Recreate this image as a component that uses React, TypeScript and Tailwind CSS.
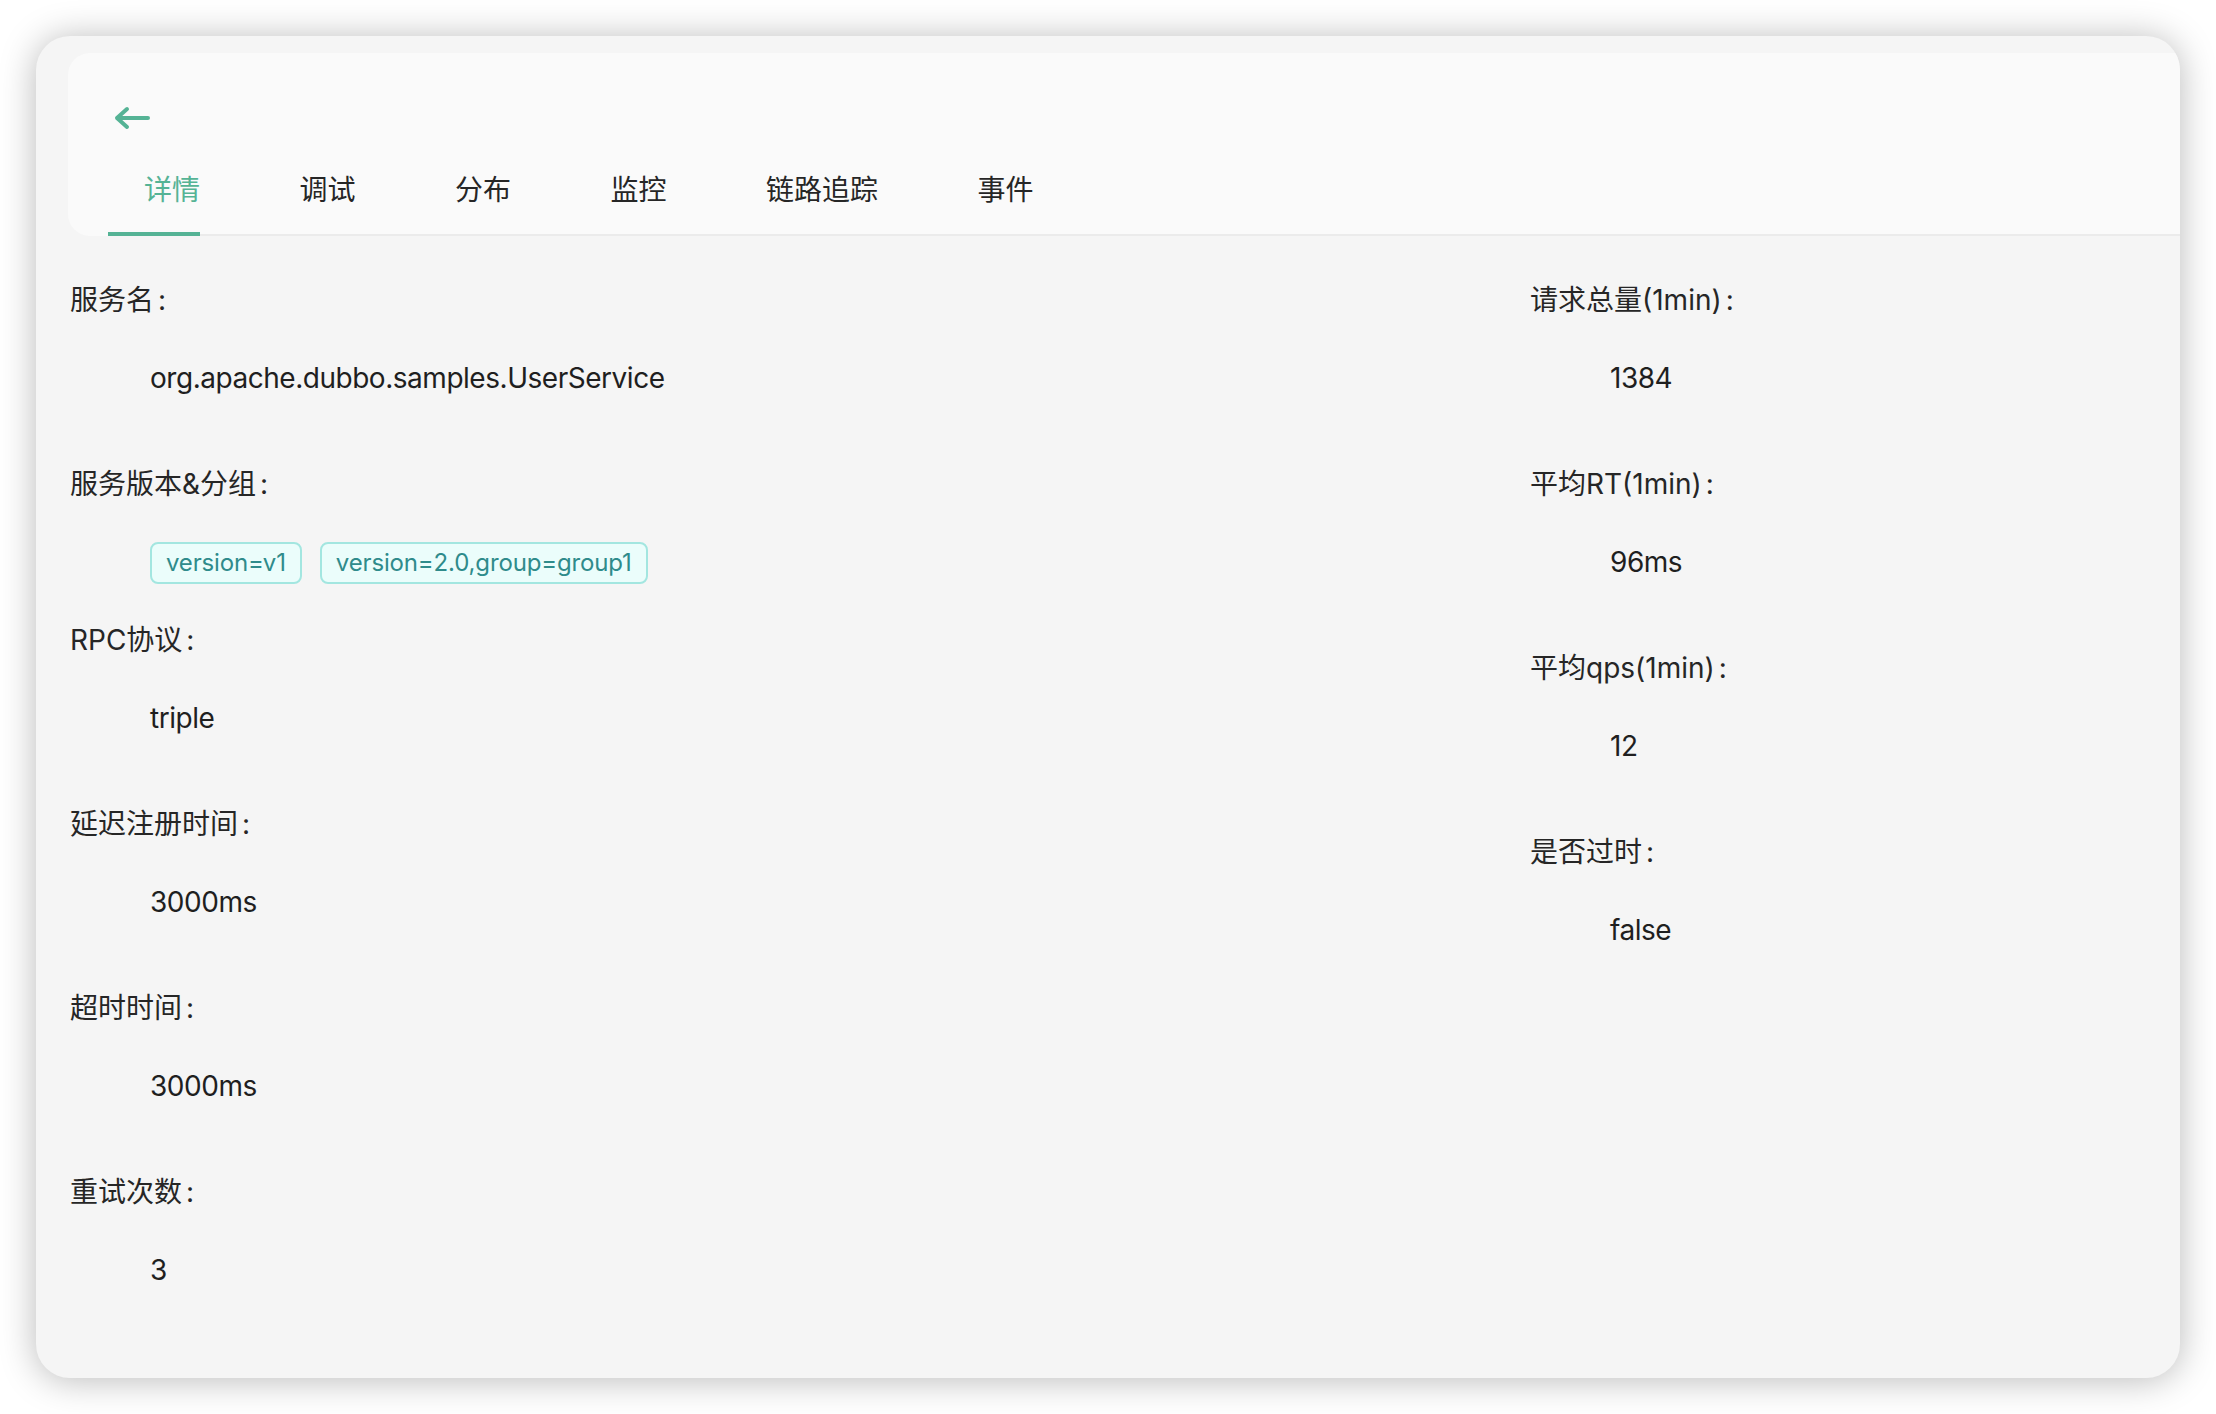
import React from "react";

type Item = { label: string; value: string | string[] };

const tabs = ["详情", "调试", "分布", "监控", "链路追踪", "事件"];

const leftItems: Item[] = [
  { label: "服务名", value: "org.apache.dubbo.samples.UserService" },
  { label: "服务版本&分组", value: ["version=v1", "version=2.0,group=group1"] },
  { label: "RPC协议", value: "triple" },
  { label: "延迟注册时间", value: "3000ms" },
  { label: "超时时间", value: "3000ms" },
  { label: "重试次数", value: "3" },
];

const rightItems: Item[] = [
  { label: "请求总量(1min)", value: "1384" },
  { label: "平均RT(1min)", value: "96ms" },
  { label: "平均qps(1min)", value: "12" },
  { label: "是否过时", value: "false" },
];

function Field({ label, value }: Item) {
  const isTags = Array.isArray(value);
  return (
    <div className={isTags ? "mb-[36px]" : "mb-[66px]"}>
      <div className="h-10 text-[28px] leading-10 text-[#262626]">
        {label}
        <span className="ml-1">:</span>
      </div>
      <div className="mt-[38px] pl-20">
        {isTags ? (
          <div className="flex gap-[18px]">
            {value.map((t) => (
              <span
                key={t}
                className="h-[42px] rounded-[8px] border-2 border-[#a3e6e0] bg-[#ebfdfb] px-[14px] text-[24px] leading-[38px] tracking-[-0.15px] text-[#2f8b8b]"
              >
                {t}
              </span>
            ))}
          </div>
        ) : (
          <div className="h-10 text-[28px] leading-10 tracking-[-0.47px] text-[#1f1f1f]">{value}</div>
        )}
      </div>
    </div>
  );
}

export default function App() {
  return (
    <div className="min-h-screen bg-white p-9 font-['Inter','Noto_Sans_CJK_SC',sans-serif]">
      <div className="h-[1342px] w-full overflow-hidden rounded-[34px] bg-[#f5f5f5] shadow-[0_2px_36px_rgba(0,0,0,0.28)]">
        {/* header */}
        <div className="ml-[32px] mt-[17px] rounded-l-[22px] bg-[#fafafa] pt-[52px]">
          <button className="ml-[45px] block">
            <svg width="38" height="26" viewBox="0 0 38 26" fill="none">
              <path
                d="M4 13H35M14 4L4 13L14 22"
                stroke="#55b395"
                strokeWidth="4"
                strokeLinecap="round"
                strokeLinejoin="round"
              />
            </svg>
          </button>
          <div className="ml-[40px] flex border-b-2 border-[#ebebeb]">
            {tabs.map((t, i) => (
              <div
                key={t}
                className={
                  "relative pb-[24px] pt-[39px] text-[28px] leading-10 " +
                  (i === 0 ? "pl-[36px] text-[#55b395]" : "ml-[99.5px] text-[#262626]")
                }
              >
                {t}
                {i === 0 && (
                  <div className="absolute bottom-[-2px] left-0 right-0 h-[4px] bg-[#55b395]" />
                )}
              </div>
            ))}
          </div>
        </div>

        {/* body */}
        <div className="grid grid-cols-[1460px_1fr] pl-[34px] pt-[44px]">
          <div>
            {leftItems.map((it) => (
              <Field key={it.label} {...it} />
            ))}
          </div>
          <div>
            {rightItems.map((it) => (
              <Field key={it.label} {...it} />
            ))}
          </div>
        </div>
      </div>
    </div>
  );
}
